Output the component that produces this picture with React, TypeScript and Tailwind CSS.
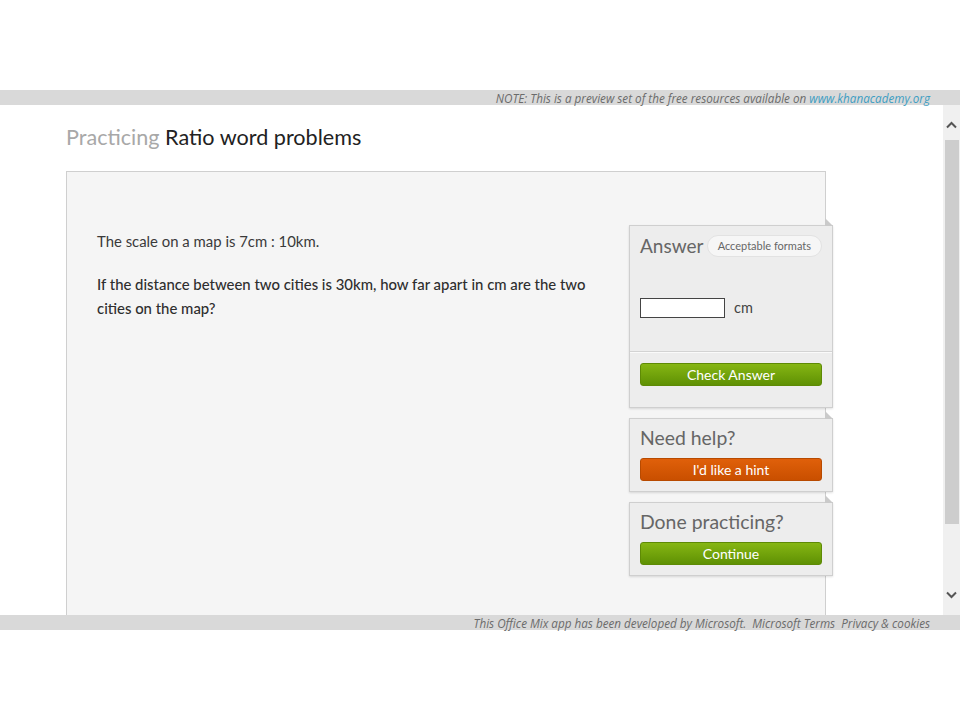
import React from "react";

const Fold = () => (
  <div className="absolute right-[-1px] top-[-8px] h-0 w-0 border-l-[8px] border-t-[8px] border-l-[#cacaca] border-t-transparent" />
);

const Card = ({ children }: { children: React.ReactNode }) => (
  <div className="relative border border-[#cfcfcf] bg-[#ededed] shadow-[0_1px_2px_rgba(0,0,0,0.12)]">
    <Fold />
    {children}
  </div>
);

const GreenBtn = ({ label }: { label: string }) => (
  <div className="flex h-[23px] w-full items-center justify-center rounded-[3px] border border-[#5e8a05] bg-gradient-to-b from-[#86b613] to-[#5f9104] text-[14px] leading-none text-white">
    {label}
  </div>
);

export default function App() {
  return (
    <div className="flex h-[720px] w-[960px] flex-col bg-white" style={{ fontFamily: "Lato, 'Open Sans', sans-serif" }}>
      <div className="h-[90px]" />
      <div
        className="h-[15px] bg-[#d9d9d9] pr-[30px] text-right text-[11.7px] italic leading-[16px] text-[#6b6b6b]"
        style={{ fontFamily: "'Open Sans', sans-serif" }}
      >
        NOTE: This is a preview set of the free resources available on{" "}
        <span className="text-[#3d9dc2]">www.khanacademy.org</span>
      </div>
      <div className="flex h-[510px]">
        <div className="flex flex-1 flex-col pl-[66px] pt-[20px]">
          <div className="text-[21.6px] leading-[24px] text-[#222]">
            <span className="text-[#a8a8a8]">Practicing</span> Ratio word problems
          </div>
          <div className="mt-[22px] flex w-[760px] flex-1 border border-b-0 border-[#cfcfcf] bg-[#f5f5f5]">
            <div className="w-[528px] pl-[30px] pt-[57px] text-[14.9px] leading-[24px]">
              <p className="mb-[19px] text-[#3a3a3a]">The scale on a map is 7cm : 10km.</p>
              <p className="font-medium text-[#2e2e2e]">
                If the distance between two cities is 30km, how far apart in cm are the two cities on the map?
              </p>
            </div>
            <div className="ml-auto mr-[-8px] flex w-[204px] flex-col gap-[10px] pt-[53px]">
              <Card>
                <div className="px-[10px] pt-[9px]">
                  <div className="flex h-[22px] items-center justify-between">
                    <span className="text-[19px] text-[#666]">Answer</span>
                    <span className="flex h-[22px] items-center rounded-full border border-[#e2e2e2] bg-[#f6f6f6] px-[10px] text-[11px] text-[#666]">
                      Acceptable formats
                    </span>
                  </div>
                  <div className="mt-[41px] flex h-[20px] items-center pb-0">
                    <div className="h-[20px] w-[85px] border border-[#444] bg-white" />
                    <span className="ml-[9px] text-[14.5px] leading-[20px] text-[#444]">cm</span>
                  </div>
                  <div className="h-[33px]" />
                </div>
                <div className="border-t border-[#d3d3d3] shadow-[inset_0_1px_0_#fafafa] px-[10px] pb-[21px] pt-[11px]">
                  <GreenBtn label="Check Answer" />
                </div>
              </Card>
              <Card>
                <div className="px-[10px] pb-[10px] pt-[7px]">
                  <div className="text-[19.4px] leading-[24px] text-[#666]">Need help?</div>
                  <div className="mt-[8px] flex h-[23px] w-full items-center justify-center rounded-[3px] border border-[#b84a00] bg-gradient-to-b from-[#e0600a] to-[#c94f00] text-[14px] leading-none text-white">
                    I'd like a hint
                  </div>
                </div>
              </Card>
              <Card>
                <div className="px-[10px] pb-[10px] pt-[7px]">
                  <div className="text-[19.4px] leading-[24px] text-[#666]">Done practicing?</div>
                  <div className="mt-[8px]">
                    <GreenBtn label="Continue" />
                  </div>
                </div>
              </Card>
            </div>
          </div>
        </div>
        <div className="ml-[117px] flex w-[17px] flex-col items-center bg-[#f0f0f0]">
          <svg className="mt-[16px]" width="11" height="8" viewBox="0 0 11 8">
            <path d="M1 6.5 L5.5 2 L10 6.5" fill="none" stroke="#555" strokeWidth="2" />
          </svg>
          <div className="mt-[11px] h-[384px] w-[14px] bg-[#cdcdcd]" />
          <div className="flex-1" />
          <svg className="mb-[16px]" width="11" height="8" viewBox="0 0 11 8">
            <path d="M1 1.5 L5.5 6 L10 1.5" fill="none" stroke="#555" strokeWidth="2" />
          </svg>
        </div>
      </div>
      <div
        className="h-[15px] bg-[#d9d9d9] pr-[30px] text-right text-[11.7px] italic leading-[16px] text-[#6b6b6b]"
        style={{ fontFamily: "'Open Sans', sans-serif" }}
      >
        This Office Mix app has been developed by Microsoft.&nbsp; Microsoft Terms&nbsp; Privacy &amp; cookies
      </div>
    </div>
  );
}
